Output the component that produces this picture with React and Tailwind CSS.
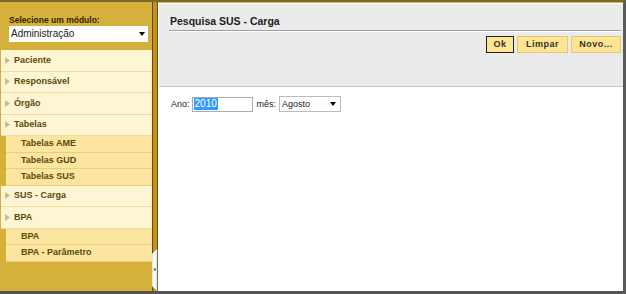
import React from "react";

const F = { fontFamily: '"Liberation Sans", Arial, sans-serif' };

function Arrow() {
  return (
    <svg width="5" height="7" viewBox="0 0 5 7" className="shrink-0">
      <polygon points="0,0 5,3.5 0,7" fill="#bcc294" />
    </svg>
  );
}

function MainItem({ label }) {
  return (
    <div className="h-[21.5px] flex items-center bg-[#fef5d5] border-b border-[#efdda0] pl-[4px] ml-[1px]">
      <Arrow />
      <span className="ml-[4px] text-[9px] font-bold text-[#5b4a08] leading-none">{label}</span>
    </div>
  );
}

function SubItem({ label }) {
  return (
    <div className="h-[16.5px] flex items-center bg-[#fbe5a0] border-b border-[#e9cf78] pl-[15px] ml-[6px]">
      <span className="text-[9px] font-bold text-[#5b4a08] leading-none">{label}</span>
    </div>
  );
}

function Btn({ children, focus }) {
  return (
    <div
      className={
        "h-[17px] flex items-center justify-center bg-[#ffe491] text-[9px] font-bold tracking-[0.5px] text-[#333] leading-none " +
        (focus ? "border border-[#222]" : "border border-[#e0c878]")
      }
    >
      {children}
    </div>
  );
}

export default function App() {
  return (
    <div style={F} className="w-[626px] h-[294px] flex flex-col bg-white border-t-2 border-t-[#7a6b2c] border-b-[3px] border-b-[#555] border-r-[3px] border-r-[#5a5a5a] overflow-hidden">
      <div className="flex flex-1 min-h-0">
        {/* Sidebar */}
        <div className="w-[152px] bg-[#d5b13b] flex flex-col">
          <div className="h-[48px] pt-[13px] pl-[9px] pr-[4px] flex flex-col">
            <div className="text-[8.5px] font-bold text-[#2e2300] leading-[11px] h-[11px]">Selecione um módulo:</div>
            <div className="h-[16px] w-[139px] bg-white flex items-center justify-between pl-[2px] pr-[3px]">
              <span className="text-[10px] text-[#222] leading-none">Administração</span>
              <svg width="6" height="4" viewBox="0 0 6 4"><polygon points="0,0 6,0 3,4" fill="#000" /></svg>
            </div>
          </div>
          <div className="flex flex-col">
            <MainItem label="Paciente" />
            <MainItem label="Responsável" />
            <MainItem label="Órgão" />
            <MainItem label="Tabelas" />
            <SubItem label="Tabelas AME" />
            <SubItem label="Tabelas GUD" />
            <SubItem label="Tabelas SUS" />
            <MainItem label="SUS - Carga" />
            <MainItem label="BPA" />
            <SubItem label="BPA" />
            <SubItem label="BPA - Parâmetro" />
          </div>
        </div>
        {/* Splitter */}
        <div className="relative w-[6px] bg-[#c4901f] border-l border-r border-[#6e4c05]">
          <svg className="absolute left-[-1px] bottom-[0px]" width="6" height="42" viewBox="0 0 6 42">
            <polygon points="5,0 5,42 0,37 0,5" fill="#f4f8fb" />
            <polygon points="5,0 0,5 0,37 5,42" fill="none" stroke="#a9bfd0" strokeWidth="0.6" />
            <polygon points="1.5,20.5 3.5,19 3.5,22" fill="#222" />
          </svg>
        </div>
        {/* Main */}
        <div className="flex-1 flex flex-col border-t border-[#d8b540] border-l border-l-white">
          <div className="h-[84px] bg-[#ebebeb] border-t border-t-white border-b border-b-[#c6c6c6] flex flex-col pl-[10px] pr-[2px]">
            <div className="h-[26px] flex items-end pb-[4px] pl-[1px]">
              <span className="text-[10.5px] font-bold text-[#222] leading-none">Pesquisa SUS - Carga</span>
            </div>
            <div className="h-[1px] bg-[#9f9f9f]" />
            <div className="h-[1px] bg-white" />
            <div className="flex justify-end gap-[3px] mt-[4px]">
              <div className="w-[28px]"><Btn focus>Ok</Btn></div>
              <div className="w-[51px]"><Btn>Limpar</Btn></div>
              <div className="w-[50px]"><Btn>Novo...</Btn></div>
            </div>
          </div>
          <div className="flex items-center pt-[9px] pl-[12px] text-[9px] text-[#222]">
            <span className="leading-none">Ano:</span>
            <div className="ml-[2px] w-[61px] h-[15px] border border-[#a5acb2] bg-white flex items-center pl-[1px]">
              <span className="bg-[#3399ff] text-white text-[10px] leading-none px-[1px] py-[1px]">2010</span>
            </div>
            <span className="ml-[4px] leading-none">mês:</span>
            <div className="ml-[3px] w-[62px] h-[16px] border border-[#b8bcc0] bg-white flex items-center justify-between pl-[2px] pr-[4px]">
              <span className="leading-none">Agosto</span>
              <svg width="6" height="4" viewBox="0 0 6 4"><polygon points="0,0 6,0 3,4" fill="#000" /></svg>
            </div>
          </div>
        </div>
      </div>
    </div>
  );
}
